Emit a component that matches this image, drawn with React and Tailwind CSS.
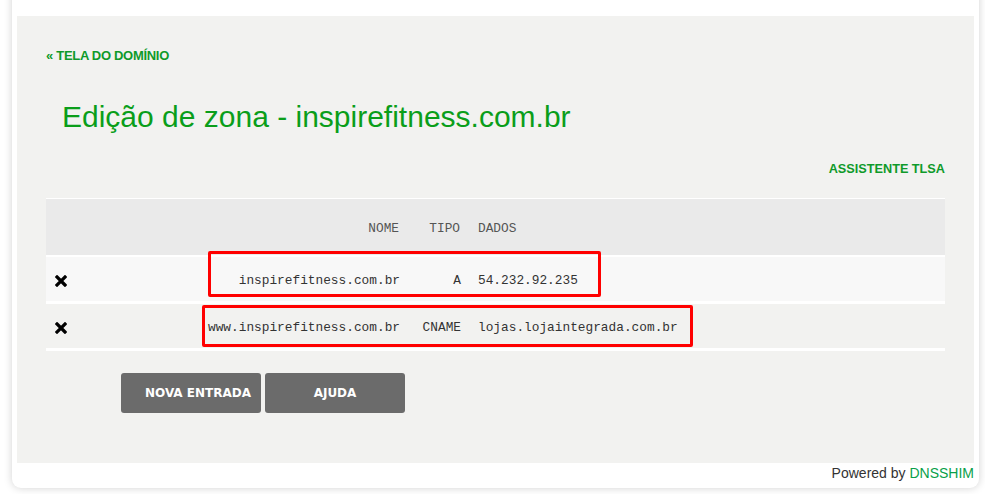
const records = [
  { name: "inspirefitness.com.br", type: "A", data: "54.232.92.235", bg: "bg-[#f8f8f8]" },
  { name: "www.inspirefitness.com.br", type: "CNAME", data: "lojas.lojaintegrada.com.br", bg: "bg-[#f2f2f0]" },
];

function RemoveIcon() {
  return (
    <svg width="12" height="12" viewBox="0 0 12 12">
      <path d="M2 2 L10 10 M10 2 L2 10" stroke="#000" strokeWidth="3.2" strokeLinecap="square" />
    </svg>
  );
}

export default function App() {
  return (
    <div className="w-[985px] h-[494px] bg-white overflow-hidden font-['Liberation_Sans',Arial,sans-serif]">
      <div className="ml-[12px] w-[967px] h-[498px] -mt-[10px] pt-[26px] px-[5px] bg-white rounded-b-[9px] shadow-[0_0_8px_rgba(0,0,0,0.18)] flex flex-col">
        <div className="h-[447px] shrink-0 bg-[#f2f2f0] px-[29px] pt-[31px]">
          <a className="block h-[16px] leading-[16px] pt-[1px] text-[13px] font-bold text-[#0f9a2a] tracking-[-0.3px]">
            « TELA DO DOMÍNIO
          </a>
          <h1 className="mt-[38px] ml-[16px] h-[32px] leading-[32px] text-[30px] text-[#0a9e1a]">
            Edição de zona - inspirefitness.com.br
          </h1>
          <div className="mt-[27px] h-[16px] leading-[16px] pt-[1px] text-right text-[12.7px] font-bold text-[#0f9a2a]">
            ASSISTENTE TLSA
          </div>
          <div className="relative mt-[22px] font-['Liberation_Mono',monospace] text-[12.8px]">
            <div className="flex items-center h-[59px] pt-[3px] bg-[#eaeaea] border-t border-b-2 border-white text-[#555]">
              <div className="w-[150px]" />
              <div className="w-[204px] text-right pr-[1px]">NOME</div>
              <div className="w-[61px] text-right pr-[1px]">TIPO</div>
              <div className="pl-[17px]">DADOS</div>
            </div>
            {records.map((r) => (
              <div key={r.name} className={`flex items-center h-[47px] pt-[3px] border-b-[3px] border-white text-[#333] ${r.bg}`}>
                <div className="w-[150px] pl-[9px] flex items-center">
                  <RemoveIcon />
                </div>
                <div className="w-[204px] text-right">{r.name}</div>
                <div className="w-[61px] text-right">{r.type}</div>
                <div className="pl-[17px]">{r.data}</div>
              </div>
            ))}
            <div className="absolute left-[162px] top-[53px] w-[393px] h-[46px] border-[3px] border-[#ff0000] rounded-[2px]" />
            <div className="absolute left-[156px] top-[107px] w-[491px] h-[42px] border-[3px] border-[#ff0000] rounded-[2px]" />
          </div>
          <div className="mt-[22px] ml-[75px] flex gap-[4px]">
            <button className="w-[140px] h-[40px] bg-[#6b6b6b] rounded-[3px] text-white text-[12px] font-bold font-['DejaVu_Sans',sans-serif] pl-[14px] pb-[1px]">
              NOVA ENTRADA
            </button>
            <button className="w-[140px] h-[40px] bg-[#6b6b6b] rounded-[3px] text-white text-[12px] font-bold font-['DejaVu_Sans',sans-serif] pb-[1px]">
              AJUDA
            </button>
          </div>
        </div>
        <div className="pt-[2px] text-right text-[14px] leading-[17px] text-[#333]">
          Powered by <span className="text-[#0a9f4a]">DNSSHIM</span>
        </div>
      </div>
    </div>
  );
}
